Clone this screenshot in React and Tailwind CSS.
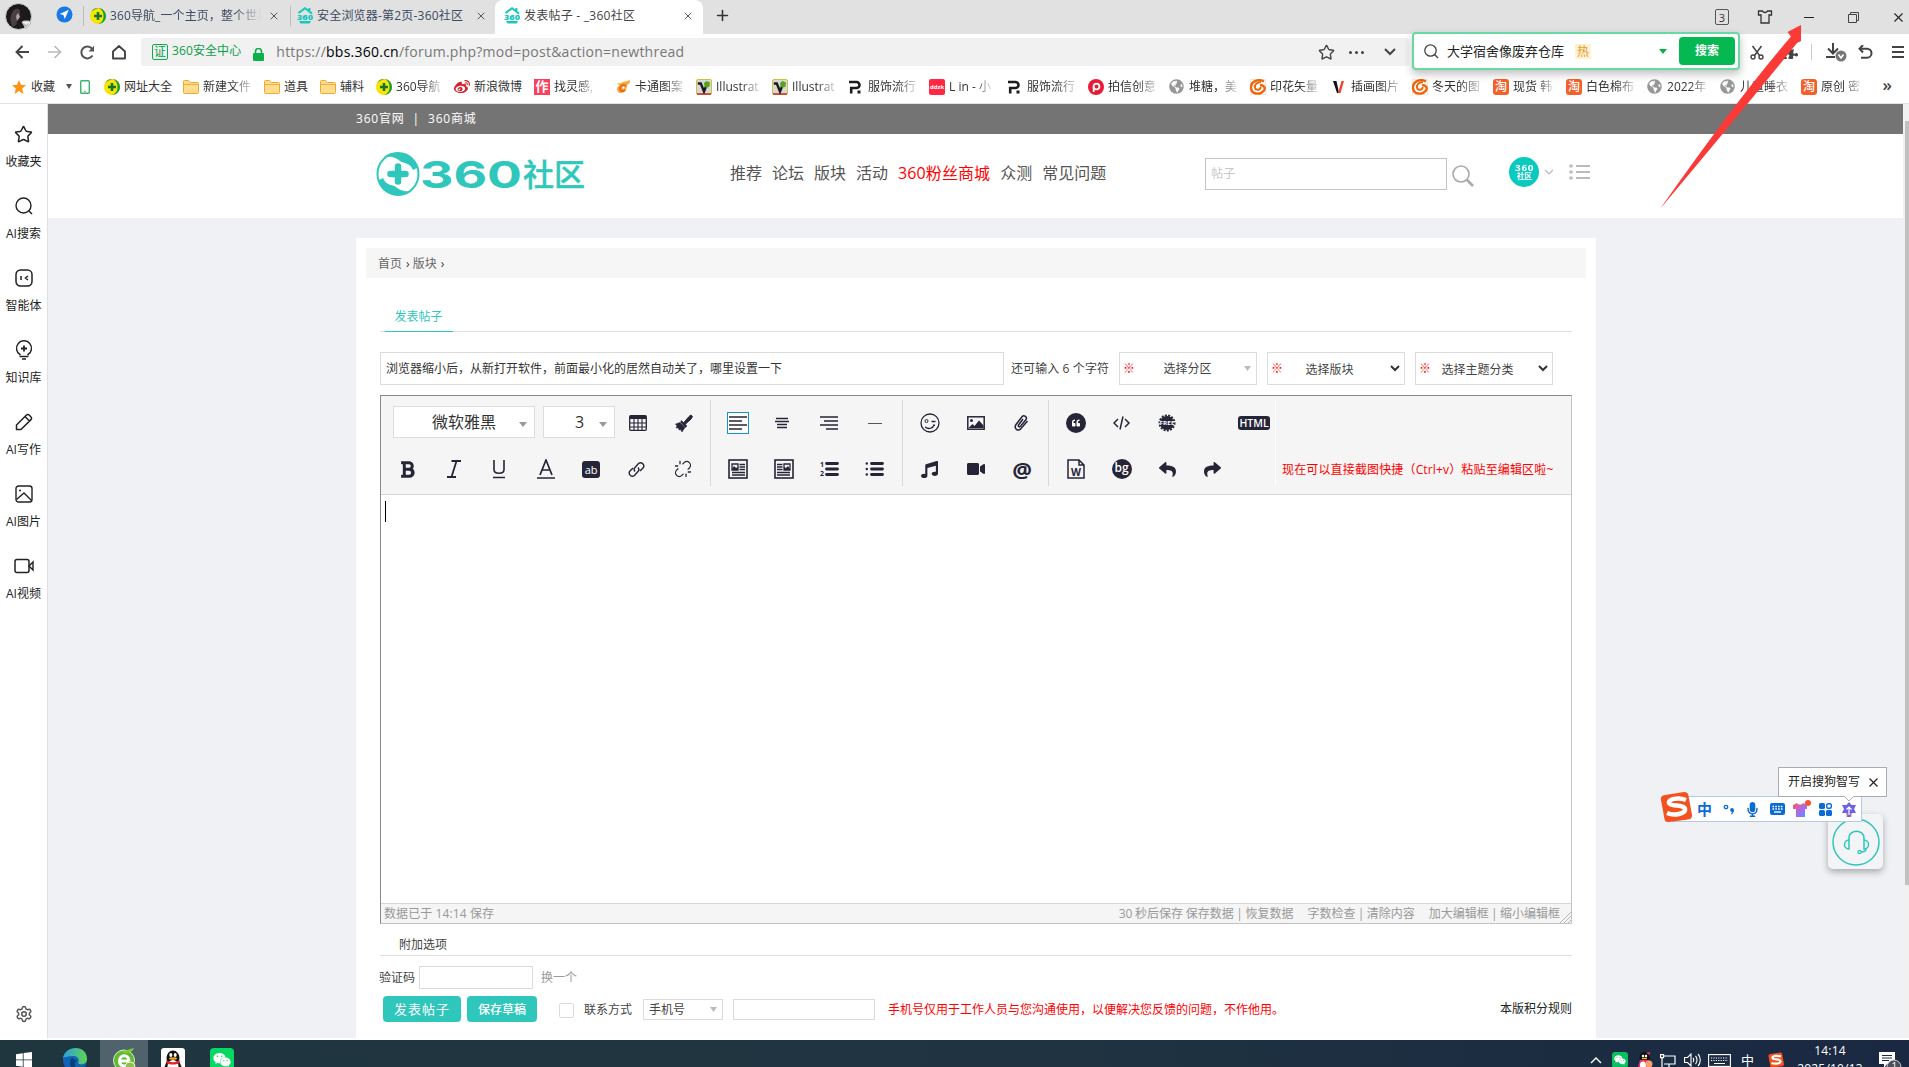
import React from "react";
import { Star, Scissors, Settings, Unlink, X, Plus } from "lucide-react";
import { FaWeixin, FaWeibo, FaReply, FaShare, FaPuzzlePiece, FaMicrophone, FaMusic, FaVideo, FaQuoteLeft, FaBold, FaGlobeAmericas } from "react-icons/fa";

const INK = "#262538";

function Svg({ w = 16, h = 16, box, children, className = "" }) {
  return (
    <svg width={w} height={h} viewBox={box || `0 0 ${w} ${h}`} className={"shrink-0 " + className} fill="none">
      {children}
    </svg>
  );
}

function Nav360({ size = 16 }) {
  return (
    <Svg w={size} h={size} box="0 0 16 16">
      <circle cx="8" cy="8" r="8" fill="#f9e500" />
      <path d="M9 0a8 8 0 0 1 7 8c0 4-3 8-8 8 4-1.500 5.500-4 5.500-8S12 2 9 0zM1 4.500A8 8 0 0 1 9 0C6 .5 3 2 1 4.500z" fill="#149c3c" />
      <path d="M8 4v8M4 8h8" stroke="#14752c" strokeWidth="2.600" />
    </Svg>
  );
}
function Fav360() {
  return (
    <Svg w={16} h={17}>
      <path d="M1.500 6 8 1.200 12 4.200M12.400 1v3.600l2.600 2" stroke="#15c7bd" strokeWidth="2" />
      <text x="0" y="12.500" fontSize="7" fontWeight="800" fill="#15c7bd" textLength="16" lengthAdjust="spacingAndGlyphs">360</text>
      <path d="M2 14h12l-1.500 2.600h-9z" fill="#15c7bd" />
    </Svg>
  );
}
function Folder() {
  return (
    <Svg w={16} h={14}>
      <path d="M.5 1.500a1 1 0 0 1 1-1h4l2 2h7a1 1 0 0 1 1 1v9a1 1 0 0 1-1 1h-13a1 1 0 0 1-1-1z" fill="#ffdc8e" stroke="#f0a92c" />
      <path d="M.5 4.500h15" stroke="#f0b040" />
    </Svg>
  );
}
function Vec() {
  return (
    <Svg>
      <rect x=".5" y=".5" width="15" height="15" rx="1.500" fill="#d8d8d8" stroke="#cfc23a" />
      <path d="M1 15h14" stroke="#c8332c" strokeWidth="1.600" />
      <path d="M1.800 4.500h3l3.200 8 3-7.500" stroke="#1c1c1c" strokeWidth="2.400" />
      <path d="M8 4l2.500-2 3.500 1.500-.5 4-3 1.500-2-2z" fill="#54a51d" />
    </Svg>
  );
}
function PDot() {
  return (
    <Svg>
      <path d="M1 3h7.500a3 3 0 0 1 0 6H3.200v5.500" stroke="#1d1d1d" strokeWidth="2.600" />
      <rect x="9.500" y="11.500" width="3" height="3" fill="#1d1d1d" />
    </Svg>
  );
}
function Globe() {
  return <FaGlobeAmericas size={15} className="mr-px shrink-0 text-[#979797]" />;
}
function Swirl() {
  return (
    <Svg>
      <rect x=".5" y=".5" width="15" height="15" fill="#fff" stroke="#f6e6dc" />
      <path d="M14 2.500C9-.5 1 2 1 8.500c0 7 9 8 13 3 2-3-1-6-4-5" stroke="#f0640a" strokeWidth="2.400" />
      <path d="M11 3C7 3 4 6 5 9s6 2 5.500-1" stroke="#f0640a" strokeWidth="2" />
    </Svg>
  );
}
function Tao() {
  return (
    <span className="flex h-4 w-4 shrink-0 items-center justify-center rounded-[3px] bg-[#f4602a] text-[12px] font-medium leading-none text-white">淘</span>
  );
}
function Cat() {
  return (
    <Svg>
      <path d="M2 4c3 1 4 0 6-1s4 0 7-2c0 3-1 4-3 5 0 4-2 8-6 8-3 0-4-2-4-4s1-3 3-3" fill="#f7a733" />
      <path d="M11 7C8 5 5 7 5 9.500S8 13 10 11" stroke="#e8611c" strokeWidth="1.800" />
      <path d="M7.500 8.500h2" stroke="#fff" strokeWidth="2" />
    </Svg>
  );
}
function Pai() {
  return (
    <Svg>
      <circle cx="8" cy="8" r="8" fill="#e81b36" />
      <circle cx="8.500" cy="7.500" r="2.900" stroke="#fff" strokeWidth="1.800" />
      <path d="M5.700 7.500V13" stroke="#fff" strokeWidth="1.800" />
    </Svg>
  );
}
function RedV() {
  return (
    <Svg>
      <path d="M2 2h3.500l2.500 12H6z" fill="#111" />
      <path d="M10.500 2H13L9.500 14H7z" fill="#f0452c" />
    </Svg>
  );
}

const BOOKMARKS = [
  ["网址大全", <Nav360 />, "w-[79px]", true],
  ["新建文件", <Folder />, "w-[81px]"],
  ["道具", <Folder />, "w-[56px]", true],
  ["辅料", <Folder />, "w-[56px]", true],
  ["360导航", <Nav360 />, "w-[78px]"],
  ["新浪微博", <FaWeibo size={16} className="shrink-0 text-[#d3232c]" />, "w-[80px]", true],
  ["找灵感,", <span className="flex h-4 w-4 shrink-0 items-center justify-center bg-[#fb3f5e] text-[13px] font-bold leading-none text-white">作</span>, "w-[81px]"],
  ["卡通图案", <Cat />, "w-[81px]"],
  ["Illustrat", <Vec />, "w-[76px]"],
  ["Illustrat", <Vec />, "w-[76px]"],
  ["服饰流行", <PDot />, "w-[81px]"],
  ["L in - 小", <span className="flex h-4 w-4 shrink-0 items-center justify-center rounded-[2px] bg-[#ff2741] text-[6px] font-bold leading-none text-white">ddzk</span>, "w-[78px]"],
  ["服饰流行", <PDot />, "w-[81px]"],
  ["拍信创意", <Pai />, "w-[81px]"],
  ["堆糖，美", <Globe />, "w-[81px]"],
  ["印花矢量", <Swirl />, "w-[81px]"],
  ["插画图片", <RedV />, "w-[81px]"],
  ["冬天的图", <Swirl />, "w-[81px]"],
  ["现货 韩", <Tao />, "w-[73px]"],
  ["白色棉布", <Tao />, "w-[81px]"],
  ["2022年", <Globe />, "w-[73px]"],
  ["儿童睡衣", <Globe />, "w-[81px]"],
  ["原创 密", <Tao />, "w-[73px]"],
];

function Bookmark({ label, icon, width, full }) {
  return (
    <div className={"flex shrink-0 items-center gap-1 " + width}>
      {icon}
      <span className={"whitespace-nowrap text-[12px] leading-[18px] text-[#333] " + (full ? "" : "[mask-image:linear-gradient(to_right,#000_60%,rgba(0,0,0,0.2)_100%)]")}>{label}</span>
    </div>
  );
}

function TabBar() {
  return (
    <div className="flex h-[34px] shrink-0 items-start bg-[#e1e1e1] text-[12px] text-[#3b4a5e]">
      <div className="ml-[5px] mt-[3px] h-[27px] w-[27px] shrink-0">
        <Svg w={28} h={27}>
          <circle cx="13.500" cy="13.500" r="13" fill="#1c1a1c" stroke="#d2d2d2" />
          <path d="M9 7c4-3 7 0 6 5-1 4-4 5-3 9l-4 3c-4-4-3-13 1-17z" fill="#4a4043" />
          <path d="M13 10l2 4-3 4-1-5z" fill="#b4a29c" />
          <path d="M17 19l2-1h5l2 2-5 6z" fill="#eee" stroke="#b8b8b8" />
          <path d="M19 20.500l2.200 3 2.200-3" stroke="#999" />
        </Svg>
      </div>
      <Svg w={17} h={17} className="ml-6 mt-[6px]">
        <circle cx="8.500" cy="8.500" r="8" fill="#1878e8" />
        <path d="M12.800 3.800 3.700 8l3.700 1.100L8.800 13z" fill="#fff" />
      </Svg>
      <div className="ml-[10px] mt-[6px] h-5 w-px bg-[#bcbcbc]" />
      <div className="ml-[6px] flex h-[31px] w-[200px] items-center gap-1">
        <Nav360 />
        <span className="w-[152px] overflow-hidden whitespace-nowrap tracking-[0.100px] [mask-image:linear-gradient(to_right,#000_82%,transparent_100%)]">360导航_一个主页，整个世界</span>
        <X size={12} className="ml-[2px] text-[#555]" strokeWidth={2} />
      </div>
      <div className="mt-[6px] h-5 w-px bg-[#bcbcbc]" />
      <div className="ml-[6px] flex h-[31px] w-[198px] items-center gap-1">
        <Fav360 />
        <span className="w-[152px] whitespace-nowrap tracking-[0.200px]">安全浏览器-第2页-360社区</span>
        <X size={12} className="ml-[2px] text-[#555]" strokeWidth={2} />
      </div>
      <div className="flex h-[34px] w-[208px] items-start rounded-t-[8px] bg-white">
        <div className="flex h-[31px] items-center gap-1 pl-[9px]">
          <Fav360 />
          <span className="w-[154px] whitespace-nowrap tracking-[0.250px] text-[#444]">发表帖子 - _360社区</span>
          <X size={12} className="text-[#555]" strokeWidth={2} />
        </div>
      </div>
      <Plus size={17} strokeWidth={2.200} className="ml-[11px] mt-[7px] text-[#333]" />
      <div className="ml-auto flex h-[34px] items-center">
        <div className="flex h-4 w-[14px] items-center justify-center rounded-[2px] border border-[#555] text-[11px] leading-none text-[#333]">3</div>
        <Svg w={16} h={14} className="ml-[28px]">
          <path d="M1.500 1h4c1 2 4 2 5 0h4v4h-2.500v8H4V5H1.500z" stroke="#333" strokeWidth="1.300" />
        </Svg>
        <div className="ml-[31px] h-px w-[10px] bg-[#222]" />
        <Svg w={11} h={11} className="ml-[34px]">
          <path d="M.5 2.500h8v8h-8zM2.500 2.500v-2h8v8h-2" stroke="#444" />
        </Svg>
        <X size={15} strokeWidth={1.700} className="ml-[32px] mr-[3px] text-[#222]" />
      </div>
    </div>
  );
}

function AddressRow() {
  return (
    <div className="flex h-[36px] shrink-0 items-start bg-white pt-1">
      <div className="flex h-7 items-center">
        <Svg w={14} h={14} className="ml-[15px]"><path d="M14 7H1.500M7.500 1 1.500 7l6 6" stroke="#444" strokeWidth="1.900" /></Svg>
        <Svg w={14} h={14} className="ml-[19px]"><path d="M0 7h12.500M6.500 1l6 6-6 6" stroke="#bbb" strokeWidth="1.700" /></Svg>
        <Svg w={15} h={15} className="ml-[18px]"><path d="M12.500 10.500A6 6 0 1 1 12 3.600" stroke="#555" strokeWidth="2" /><path d="M14 .8V6.500H8.500z" fill="#555" /></Svg>
        <Svg w={16} h={15} className="ml-4"><path d="M2 13.500V6.500L8 1l6 5.500v7z" stroke="#444" strokeWidth="1.900" strokeLinejoin="round" /></Svg>
      </div>
      <div className="ml-[14px] flex h-7 w-[1268px] shrink-0 items-center rounded-[3px] bg-[#f1f1f1]">
        <div className="ml-[11px] flex h-4 w-4 items-center justify-center rounded-[2px] border border-[#08b04c] text-[12px] leading-none text-[#08a048]">证</div>
        <span className="-mt-[2px] ml-1 text-[12px] tracking-[0.100px] text-[#08a048]">360安全中心</span>
        <Svg w={11} h={13} className="ml-3 mt-1"><path d="M2.500 6V3.500a3 3 0 0 1 6 0V6" stroke="#0cb04c" strokeWidth="1.600" /><rect y="5" width="11" height="8" rx="1" fill="#0cb04c" /></Svg>
        <span className="-mt-px ml-3 whitespace-nowrap text-[14px] tracking-[0.245px] text-[#777]">https://<span className="text-black">bbs.360.cn</span>/forum.php?mod=post&amp;action=newthread</span>
        <Star size={17} strokeWidth={2} className="ml-auto text-[#444]" />
        <div className="ml-[14px] flex gap-[3px]">
          <i className="h-[3px] w-[3px] rounded-full bg-[#444]" /><i className="h-[3px] w-[3px] rounded-full bg-[#444]" /><i className="h-[3px] w-[3px] rounded-full bg-[#444]" />
        </div>
        <Svg w={12} h={8} className="ml-[20px] mr-[13px]"><path d="M1 1l5 5 5-5" stroke="#444" strokeWidth="2" /></Svg>
      </div>
      <div className="z-10 -mt-[6px] ml-[3px] flex h-[38px] w-[328px] shrink-0 items-center rounded-[4px] border-2 border-[#67d9a2] bg-white shadow-[0_4px_8px_rgba(0,0,0,0.25)]">
        <Svg w={15} h={15} className="ml-[10px]"><circle cx="6.500" cy="6.500" r="5.700" stroke="#444" strokeWidth="1.300" /><path d="M10.500 10.500 14 14" stroke="#444" strokeWidth="1.400" /></Svg>
        <span className="ml-2 mt-[2px] text-[13px] text-[#222]">大学宿舍像废弃仓库</span>
        <span className="ml-[11px] bg-[#fff2d6] px-[2px] text-[12px] leading-[15px] text-[#e89a1c]">热</span>
        <Svg w={8} h={5} className="ml-auto"><path d="M0 0h8L4 5z" fill="#08b04c" /></Svg>
        <div className="ml-3 mr-[3px] flex h-7 w-14 items-center justify-center rounded-[4px] bg-[#06b851] text-[12px] font-bold text-white">搜索</div>
      </div>
      <div className="flex h-7 flex-1 items-center">
        <Svg w={14} h={15} className="ml-[10px]"><path d="M2.500 1 9.500 10.500M11.500 1 4.500 10.500" stroke="#444" strokeWidth="1.500" /><circle cx="3" cy="12" r="2" stroke="#444" strokeWidth="1.400" /><circle cx="11" cy="12" r="2" stroke="#444" strokeWidth="1.400" /></Svg>
        <FaPuzzlePiece size={16} className="ml-[18px] shrink-0 text-[#444]" />
        <div className="ml-[13px] h-4 w-px bg-[#ccc]" />
        <Svg w={22} h={20} className="ml-[13px]">
          <path d="M8 1v10M3 6.500l5 5 5-5M1 15h9" stroke="#444" strokeWidth="2" />
          <circle cx="16" cy="14" r="5.500" fill="#777" /><path d="M13.500 12.500 16 16l2.500-3.500" stroke="#fff" strokeWidth="1.500" />
        </Svg>
        <Svg w={15} h={14} className="ml-[11px]"><path d="M5 0 1.500 3.700 5 7.500M2 3.700h7a4.500 4.500 0 0 1 0 9H3" stroke="#444" strokeWidth="2" /></Svg>
        <Svg w={12} h={12} className="ml-[19px]"><path d="M0 1h12M0 6h12M0 11h12" stroke="#444" strokeWidth="1.800" /></Svg>
      </div>
    </div>
  );
}

function BookmarkRow() {
  return (
    <div className="flex h-[34px] shrink-0 items-center border-b border-[#e0e3e2] bg-white text-[12px] text-[#333]">
      <Svg w={14} h={14} className="ml-3"><path d="M7 0l2 4.800 5 .4-3.800 3.300L11.400 14 7 11.100 2.600 14l1.200-5.500L0 5.200l5-.4z" fill="#ff9413" /></Svg>
      <span className="ml-[5px]">收藏</span>
      <Svg w={6} h={5} className="ml-[11px]"><path d="M0 0h6L3 5z" fill="#555" /></Svg>
      <Svg w={10} h={14} className="ml-2"><rect x=".7" y=".7" width="8.600" height="12.600" rx="1" stroke="#3cb46e" strokeWidth="1.400" /><path d="M4 11.300h2" stroke="#3cb46e" /></Svg>
      <div className="ml-[14px] flex flex-1">
        {BOOKMARKS.map(([label, icon, width, full], i) => <Bookmark key={i} label={label} icon={icon} width={width} full={full} />)}
      </div>
      <span className="-mt-[3px] mr-[17px] text-[17px] font-semibold leading-4 text-[#444]">»</span>
    </div>
  );
}

const SIDE = [
  ["收藏夹", <Star size={19} strokeWidth={1.900} />],
  ["AI搜索", <Svg w={18} h={18}><circle cx="8.500" cy="8.500" r="7.500" stroke="currentColor" strokeWidth="1.400" /><path d="M13.500 13.500 17 17" stroke="currentColor" strokeWidth="1.500" /></Svg>],
  ["智能体", <Svg w={18} h={18}><rect x="1" y="1" width="16" height="16" rx="4.500" stroke="currentColor" strokeWidth="1.500" /><path d="M6 7v4M13 7l-2.500 2L13 11" stroke="currentColor" strokeWidth="1.500" /></Svg>],
  ["知识库", <Svg w={18} h={20}><path d="M5.500 15A7.500 7.500 0 1 1 12.500 15M4.500 16.500h9M7 19h4" stroke="currentColor" strokeWidth="1.500" /><path d="M9 5.500v6M6 8.500h6" stroke="currentColor" strokeWidth="1.800" /></Svg>],
  ["AI写作", <Svg w={18} h={18}><path d="M1.500 16.500v-4.500L11.500 2a1.800 1.800 0 0 1 2.600 0L16 4a1.800 1.800 0 0 1 0 2.600l-10 9.900zM10 3.500l4.500 4.500" stroke="currentColor" strokeWidth="1.500" strokeLinejoin="round" /></Svg>],
  ["AI图片", <Svg w={18} h={18}><rect x="1" y="1" width="16" height="16" rx="2.500" stroke="currentColor" strokeWidth="1.400" /><circle cx="5" cy="5.500" r="1" fill="currentColor" /><path d="M1.500 14.500 9 8l7.500 7.500" stroke="currentColor" strokeWidth="1.400" /></Svg>],
  ["AI视频", <Svg w={20} h={16}><rect x="1" y="1.500" width="14" height="13" rx="2" stroke="currentColor" strokeWidth="1.500" /><path d="M15 8l4-4v8z" stroke="currentColor" strokeWidth="1.400" /></Svg>],
];

function Sidebar() {
  return (
    <aside className="flex w-12 shrink-0 flex-col border-r border-[#dfe0e3] bg-white pt-[20px] text-[#222]">
      {SIDE.map(([label, icon]) => (
        <div key={label} className="flex h-[72px] shrink-0 flex-col items-center">
          <div className="flex h-5 items-center">{icon}</div>
          <span className="mt-[9px] whitespace-nowrap text-[12px] leading-[18px]">{label}</span>
        </div>
      ))}
      <div className="mb-[15px] mt-auto flex justify-center">
        <Settings size={18} strokeWidth={2} className="text-[#555]" />
      </div>
    </aside>
  );
}

function SiteHeader() {
  return (
    <>
      <div className="flex h-[30px] shrink-0 items-center bg-[#747474] pl-[308px] text-[12px] tracking-[0.800px] text-white">
        <span>360官网</span><span className="mx-[8px]">|</span><span>360商城</span>
      </div>
      <header className="flex h-[84px] shrink-0 items-center bg-white">
        <Svg w={210} h={46} className="ml-[328px] mt-[-5px]">
          <ellipse cx="22" cy="23" rx="20.500" ry="21" stroke="#2fc7bb" strokeWidth="2" />
          <path d="M8 6c10-8 26-4 32 7l1 4-4 2c-3-8-9-6-13-9S17 5 8 6z" fill="#2fc7bb" />
          <path d="M36 40c-10 8-26 4-32-7l-1-4 4-2c3 8 9 6 13 9s7 5 16 4z" fill="#2fc7bb" />
          <path d="M22 15.500v15M14.500 23h15" stroke="#2fc7bb" strokeWidth="6.500" strokeLinecap="round" />
          <text x="44" y="36.500" fontSize="37" fontWeight="700" fill="#2fc7bb" fontFamily="Inter" textLength="102" lengthAdjust="spacingAndGlyphs">360</text>
          <text x="147" y="34.500" fontSize="31" fontWeight="500" fill="#2fc7bb" stroke="#2fc7bb" strokeWidth=".4" fontFamily="Noto Sans CJK SC" textLength="62" lengthAdjust="spacingAndGlyphs">社区</text>
        </Svg>
        <nav className="-mt-[7px] ml-[144px] flex gap-[10px] text-[16px] text-[#555]">
          <span>推荐</span><span>论坛</span><span>版块</span><span>活动</span><span className="tracking-[0.100px] text-[#f00]">360粉丝商城</span><span>众测</span><span>常见问题</span>
        </nav>
        <div className="-mt-[4px] ml-[99px] flex h-8 w-[242px] items-center border border-[#c4c4c4] pl-[5px] text-[12px] text-[#c8c8c8]">帖子</div>
        <Svg w={22} h={22} className="-mt-px ml-[5px]"><circle cx="9" cy="9" r="8" stroke="#aaa" strokeWidth="1.600" /><path d="M14.500 14.500l6.500 6.500" stroke="#aaa" strokeWidth="2.600" /></Svg>
        <div className="-mt-[8px] ml-[35px] flex h-[30px] w-[30px] flex-col items-center justify-center rounded-full bg-[#08cabe] font-bold text-white">
          <span className="scale-x-125 text-[8px] leading-[8px] tracking-[0.500px]">360</span><span className="text-[7.500px] leading-[8px]">社区</span>
        </div>
        <Svg w={10} h={6} className="-mt-[8px] ml-[5px]"><path d="M1 1l4 4 4-4" stroke="#bbb" strokeWidth="1.200" /></Svg>
        <Svg w={21} h={16} className="-mt-[8px] ml-[15px]"><path d="M7 2h14M7 8h14M7 14h14" stroke="#bbb" strokeWidth="2" /><circle cx="2" cy="2" r="1.800" fill="#bbb" /><circle cx="2" cy="8" r="1.800" fill="#bbb" /><circle cx="2" cy="14" r="1.800" fill="#bbb" /></Svg>
      </header>
    </>
  );
}

function Cell({ children, active }) {
  return (
    <div className="flex h-[46px] w-[45.700px] items-center justify-center text-[#262538]">
      {active ? <div className="flex h-[22px] w-[22px] items-center justify-center border border-[#1296c8] bg-white">{children}</div> : children}
    </div>
  );
}

function Lines({ kind }) {
  const d = {
    left: "M0 1h18M0 5h13M0 9h18M0 13h13",
    center: "M1 2.500h12M0 5.500h14M2 8.500h10M2 11.500h10",
    right: "M0 1h18M4 5h14M0 9h18M6 13h12",
  }[kind];
  return <Svg w={18} h={14}><path d={d} stroke={INK} strokeWidth="1.300" /></Svg>;
}
function DocPic({ flip }) {
  return (
    <Svg w={20} h={20} className={flip ? "-scale-x-100" : ""}>
      <rect x="1" y="1" width="18" height="18" stroke={INK} strokeWidth="1.600" />
      <path d="M4 5h6v6H4zM11.500 5.500H17M11.500 8H17M11.500 10.500H17M4 13.500h13M4 16h13" stroke={INK} strokeWidth="1.300" />
      <path d="M4 10l2-3 2 2 2-1v3H4z" fill={INK} />
    </Svg>
  );
}
function ListIcon({ num }) {
  return (
    <Svg w={19} h={16}>
      <path d="M6.500 2.500h11M6.500 8h11M6.500 13.500h11" stroke={INK} strokeWidth="2.800" strokeLinecap="round" />
      {num ? (<><text x="0" y="6" fontSize="7" fontWeight="700" fill={INK}>1</text><text x="0" y="15" fontSize="7" fontWeight="700" fill={INK}>2</text></>) : (
        <><circle cx="1.800" cy="2.500" r="1.200" fill={INK} /><circle cx="1.800" cy="8" r="1.200" fill={INK} /><circle cx="1.800" cy="13.500" r="1.200" fill={INK} /></>
      )}
    </Svg>
  );
}
function Caret({ className = "" }) {
  return <Svg w={8} h={5} className={className}><path d="M0 0h8L4 5z" fill="#999" /></Svg>;
}
function ChainIcon() {
  return (
    <Svg w={17} h={17}>
      <path d="M7 10.500a3 3 0 0 1 0-4l3.500-4a3.200 3.200 0 0 1 4.500 4.500l-3 3M10 6.500a3 3 0 0 1 0 4l-3.500 4A3.200 3.200 0 0 1 2 10l3-3" stroke={INK} strokeWidth="1.400" />
    </Svg>
  );
}

function EditorToolbar() {
  return (
    <div className="flex h-[99px] shrink-0 items-start border-b border-[#d6d6d6] bg-[#f5f5f5]">
      <div className="ml-[4px] mt-1 h-[86px] w-[326px] border-r border-[#d8d8d8]">
        <div className="flex h-[46px] items-center">
          <div className="-mt-[2px] ml-2 flex h-8 w-[142px] shrink-0 items-center border border-[#dcdcdc] bg-white pl-[38px] text-[16px] text-[#333]">微软雅黑<Caret className="ml-auto mr-[7px] mt-1" /></div>
          <div className="-mt-[2px] ml-2 flex h-8 w-[72px] shrink-0 items-center border border-[#dcdcdc] bg-white pl-[31px] text-[16px] text-[#333]">3<Caret className="ml-auto mr-[7px] mt-1" /></div>
          <Cell>
            <Svg w={18} h={16}>
              <rect x=".7" y=".7" width="16.600" height="14.600" rx="1" stroke={INK} strokeWidth="1.300" />
              <path d="M1 2.500h16" stroke={INK} strokeWidth="3" /><path d="M1 8h16M1 12h16M5 3v12M9 3v12M13 3v12" stroke={INK} strokeWidth="1.100" />
            </Svg>
          </Cell>
          <Cell>
            <Svg w={18} h={18}>
              <path d="M8.500 9 14 2.500l2-1.500 1.500 1.500L16 5l-6 5.500z" fill={INK} stroke={INK} strokeWidth="1" />
              <path d="M6.500 6.500 12 12l-1.500 1.500-5-5.500zM5 8.500l5 5L7 18l-1.500-2.500L4 16l-.5-2L1 14l1-2-1.500-2z" fill={INK} stroke={INK} strokeWidth=".5" />
            </Svg>
          </Cell>
        </div>
        <div className="flex h-[46px] items-center">
          <Cell><FaBold size={19} /></Cell>
          <Cell><Svg w={14} h={18}><path d="M4.500 1H14M0 17h9M9.500 1 4.500 17" stroke={INK} strokeWidth="1.800" /></Svg></Cell>
          <Cell><Svg w={14} h={19}><path d="M2 0v9.500c0 5 10 5 10 0V0M1 17.500h12" stroke={INK} strokeWidth="1.600" /></Svg></Cell>
          <Cell><Svg w={18} h={20} className="ml-[3px]"><path d="M3 16 9 1l6 15M5 11h8M0 19h18" stroke={INK} strokeWidth="1.700" /></Svg></Cell>
          <Cell><span className="ml-px flex h-[17px] w-[18px] items-center justify-center rounded-[3px] bg-[#262538] text-[11px] leading-none text-white">ab</span></Cell>
          <Cell><ChainIcon /></Cell>
          <Cell><Unlink size={18} strokeWidth={1.700} className="ml-[2px]" /></Cell>
        </div>
      </div>
      <div className="mt-1 h-[86px] w-[192px] border-r border-[#d8d8d8] pl-[4px]">
        <div className="flex h-[46px]"><Cell active><Lines kind="left" /></Cell><Cell><Lines kind="center" /></Cell><Cell><Lines kind="right" /></Cell><Cell><span className="h-px w-[14px] bg-[#555]" /></Cell></div>
        <div className="flex h-[46px]"><Cell><DocPic /></Cell><Cell><DocPic flip /></Cell><Cell><ListIcon num /></Cell><Cell><ListIcon /></Cell></div>
      </div>
      <div className="mt-1 h-[86px] w-[146px] border-r border-[#d8d8d8] pl-[4px]">
        <div className="flex h-[46px]">
          <Cell><Svg w={20} h={20}><circle cx="10" cy="10" r="9" stroke={INK} strokeWidth="1.300" /><circle cx="6.500" cy="8" r="1.500" stroke={INK} /><path d="M11.500 8.500h4M5 14c4 3 8 1 9-2l1 .5" stroke={INK} strokeWidth="1.300" /></Svg></Cell>
          <Cell><Svg w={18} h={14}><rect x=".8" y=".8" width="16.400" height="12.400" stroke={INK} strokeWidth="1.500" /><circle cx="4.500" cy="4.500" r="1.500" fill={INK} /><path d="M2 11.500 5.500 8l2 2L12 4.500l4.500 5v2.500H2z" fill={INK} /></Svg></Cell>
          <Cell><Svg w={16} h={18}><path d="M10 5 5.500 11c-.8 1.500.8 2.500 2 1.300L13 5.500c1.500-2.500-2-5-4-2.700L3 10.500c-2.500 4 2 7.500 5 4L14.500 7" stroke={INK} strokeWidth="1.500" /></Svg></Cell>
        </div>
        <div className="flex h-[46px]"><Cell><FaMusic size={17} /></Cell><Cell><FaVideo size={18} /></Cell><Cell><span className="ml-[2px] text-[22px] font-bold leading-5">@</span></Cell></div>
      </div>
      <div className="mt-1 h-[86px] w-[227px] border-r border-white pl-[4px]">
        <div className="flex h-[46px]">
          <Cell><span className="flex h-5 w-5 items-center justify-center rounded-full bg-[#262538] text-white"><FaQuoteLeft size={8} /></span></Cell>
          <Cell><Svg w={17} h={14}><path d="M5 3 1 7l4 4M12 3l4 4-4 4M10 .5l-3 13" stroke={INK} strokeWidth="1.500" /></Svg></Cell>
          <Cell>
            <Svg w={18} h={18}><circle cx="9" cy="9" r="7" fill={INK} /><circle cx="9" cy="9" r="7.500" stroke={INK} strokeWidth="2" strokeDasharray="2 1.300" /><text x="1.500" y="11" fontSize="5.500" fontWeight="700" fill="#fff" textLength="15" lengthAdjust="spacingAndGlyphs">FREE</text></Svg>
          </Cell>
          <span className="ml-[48px] mt-4 flex h-[14px] w-[32px] items-center justify-center rounded-[3px] bg-[#262538] text-[10.500px] font-semibold leading-none text-white">HTML</span>
        </div>
        <div className="flex h-[46px]">
          <Cell><Svg w={18} h={20}><path d="M1 1h11l5 5v13H1zM12 1v5h5" stroke={INK} strokeWidth="1.500" /><text x="4" y="16.500" fontSize="11" fontWeight="700" fill={INK} textLength="10" lengthAdjust="spacingAndGlyphs">W</text></Svg></Cell>
          <Cell><span className="flex h-5 w-5 items-center justify-center rounded-full bg-[#262538] pb-[2px] text-[12px] font-semibold leading-none text-white">bg</span></Cell>
          <Cell><FaReply size={17} /></Cell>
          <Cell><FaShare size={17} /></Cell>
        </div>
      </div>
      <span className="ml-[6px] mt-[65px] whitespace-nowrap text-[12px] leading-[18px] tracking-[0.150px] text-[#f00]">现在可以直接截图快捷（Ctrl+v）粘贴至编辑区啦~</span>
    </div>
  );
}

function Pick({ label, native }) {
  return (
    <div className="mr-[10px] flex h-[33px] w-[138px] shrink-0 items-center border border-[#dcdcdc] bg-white pl-[3px]">
      <span className="w-3 text-[#f00]">※</span>
      <span className={native ? "flex-1 pr-[14px] pt-[2px] text-center" : "flex-1 pr-1 text-center"}>{label}</span>
      {native ? <Svg w={10} h={7} className="mr-1"><path d="M1 1l4 4 4-4" stroke="#333" strokeWidth="2" /></Svg> : <Svg w={7} h={5} className="mr-[5px]"><path d="M0 0h7L3.500 5z" fill="#bbb" /></Svg>}
    </div>
  );
}

function PostForm() {
  return (
    <main className="ml-[308px] mt-5 flex h-[801px] w-[1240px] flex-col bg-white px-[10px] pt-[10px] text-[12px] text-[#444]">
      <div className="flex h-[30px] shrink-0 items-center bg-[#f6f6f6] pl-3 pt-[2px] text-[#666]">首页<span className="ml-1 mr-[3px] text-[#333]">›</span>版块<span className="ml-1 text-[#333]">›</span></div>
      <div className="mx-[14px] mt-[23px] flex h-[31px] shrink-0 border-b border-[#e0e0e0]">
        <div className="ml-[5px] flex h-[31px] w-[68px] items-center justify-center border-b border-[#2fc7bb] pr-px pt-[2px] text-[#2fc7bb]">发表帖子</div>
      </div>
      <div className="ml-[14px] mt-5 flex shrink-0 items-center">
        <div className="flex h-[33px] w-[624px] items-center border border-[#dcdcdc] pl-[5px] text-[#333]">浏览器缩小后，从新打开软件，前面最小化的居然自动关了，哪里设置一下</div>
        <span className="ml-[7px] w-[108px] whitespace-nowrap tracking-[0.100px]">还可输入 6 个字符</span>
        <Pick label="选择分区" />
        <Pick label="选择版块" native />
        <Pick label="选择主题分类" native />
      </div>
      <section className="ml-[14px] mt-[10px] flex h-[529px] w-[1192px] shrink-0 flex-col border border-[#c4c4c4] border-l-[#888] border-t-[#888]">
        <EditorToolbar />
        <div className="flex-1 pl-1 pt-[6px]"><div className="h-[21px] w-px bg-black" /></div>
        <div className="flex h-5 shrink-0 items-center border-t border-[#d6d6d6] bg-[#f5f5f5] pl-[3px] text-[#999]">
          <span className="tracking-[0.100px]">数据已于 14:14 保存</span>
          <span className="ml-auto [word-spacing:-0.500px]">30 秒后保存 保存数据 | 恢复数据</span>
          <span className="ml-[14px] [word-spacing:-0.800px]">字数检查 | 清除内容</span>
          <span className="ml-[14px] [word-spacing:-0.800px]">加大编辑框 | 缩小编辑框</span>
          <Svg w={11} h={18}><path d="M0 18 11 7M4 18l7-7M8 18l3-3" stroke="#bbb" /></Svg>
        </div>
      </section>
      <div className="mx-[14px] flex h-[32px] shrink-0 items-center border-b border-[#e0e0e0] pl-[19px] pt-[10px]">附加选项</div>
      <div className="ml-[13px] mt-[10px] flex h-[23px] shrink-0 items-center">验证码<div className="ml-[4px] mr-2 h-[23px] w-[114px] border border-[#dcdcdc]" /><span className="text-[#999]">换一个</span></div>
      <div className="ml-[17px] mr-[14px] mt-[7px] flex h-[26px] shrink-0 items-center">
        <div className="flex h-[26px] w-[78px] items-center justify-center rounded-[4px] bg-[#2fc7bb] pt-px text-[13px] tracking-[1px] text-white">发表帖子</div>
        <div className="ml-[6px] flex h-[26px] w-[70px] items-center justify-center rounded-[4px] bg-[#2fc7bb] pt-px font-medium text-white">保存草稿</div>
        <div className="ml-[22px] mt-[3px] h-[15px] w-[15px] rounded-[2px] border border-[#dcdcdc]" />
        <span className="ml-[10px] pt-px">联系方式</span>
        <div className="ml-[11px] mt-px flex h-[21px] w-[80px] items-center border border-[#dcdcdc] pl-[5px]">手机号<Svg w={7} h={5} className="ml-auto mr-[5px]"><path d="M0 0h7L3.500 5z" fill="#bbb" /></Svg></div>
        <div className="ml-[10px] mt-px h-[21px] w-[142px] border border-[#dcdcdc]" />
        <span className="ml-[13px] pt-px text-[#f00]">手机号仅用于工作人员与您沟通使用，以便解决您反馈的问题，不作他用。</span>
        <span className="ml-auto text-[#222]">本版积分规则</span>
      </div>
    </main>
  );
}

function Sogou({ size }) {
  return (
    <Svg w={size} h={size} box="0 0 32 32">
      <path d="M5 4 24 1c3 0 4 1 4.500 4L32 24c0 3-1 4-4 4.500L9 31c-3 .5-4-1-4.500-3L1 9c-.5-3 1-4.500 4-5z" fill="#f4511e" />
      <path d="M26 9c-8-3-18-1-17 3s15 1 16 6-11 7-18 4" stroke="#fff" strokeWidth="4.500" />
    </Svg>
  );
}

function InputMethodBar() {
  return (
    <>
      <div className="absolute left-[1828px] top-[814px] flex h-[55px] w-[55px] items-center justify-center rounded-[5px] bg-[#f3f4f5] shadow-[0_3px_7px_rgba(0,0,0,0.3)]">
        <Svg w={48} h={48}>
          <circle cx="24" cy="24" r="23" stroke="#2fc7bb" strokeWidth="1.500" />
          <path d="M17 22v-2c0-9 15-9 15 0v2" stroke="#2fc7bb" strokeWidth="1.500" />
          <path d="M17 22c-6 0-6 9 0 9zM32 22c6 0 6 9 0 9zM34 31c0 3-3 3-5 3" stroke="#2fc7bb" strokeWidth="1.500" />
          <circle cx="27.500" cy="34" r="1.600" stroke="#2fc7bb" strokeWidth="1.300" />
        </Svg>
      </div>
      <div className="absolute left-[1672px] top-[796px] flex h-[26px] w-[190px] items-center border border-[#b3c9e4] bg-white text-[#0a6bd6]">
        <span className="ml-[24px] w-[17px] text-[15px] font-bold leading-none">中</span>
        <Svg w={12} h={12} className="ml-[9px]"><circle cx="3" cy="4" r="1.700" stroke="currentColor" strokeWidth="1.300" /><circle cx="9" cy="7" r="1.900" fill="currentColor" /><path d="M10.500 7c0 2-1 3-2 4" stroke="currentColor" strokeWidth="1.300" /></Svg>
        <FaMicrophone size={15} className="ml-[10px]" />
        <Svg w={15} h={12} className="ml-[10px]"><rect width="15" height="12" rx="2" fill="currentColor" /><path d="M2.500 3.500h10M2.500 6h10" stroke="#fff" strokeWidth="1.500" strokeDasharray="1.600 1.200" /><path d="M4 9h7" stroke="#fff" strokeWidth="1.400" /></Svg>
        <Svg w={18} h={18} className="ml-[8px]">
          <defs><linearGradient id="shirt" x1="0" y1="0" x2="1" y2="1"><stop stopColor="#ff5a5a" /><stop offset=".6" stopColor="#a46cf6" /><stop offset="1" stopColor="#2ea8ff" /></linearGradient></defs>
          <path d="M0 5l4-2c1 2 5 2 6 0l4 2v4h-2v8H3V9H0z" fill="url(#shirt)" /><circle cx="15" cy="3" r="3" fill="#fa5232" />
        </Svg>
        <Svg w={13} h={13} className="ml-[8px]"><rect width="6" height="6" rx="1.500" fill="currentColor" /><rect x="7.700" y=".7" width="4.600" height="4.600" rx="1.500" stroke="currentColor" strokeWidth="1.400" /><rect y="7" width="6" height="6" rx="1.500" fill="currentColor" /><rect x="7" y="7" width="6" height="6" rx="1.500" fill="currentColor" /></Svg>
        <Svg w={14} h={15} className="ml-[10px]"><path d="M7 0l2.500 3H14l-2 4 2 4H9.500L9 15H5l-.5-4H0l2-4-2-4h4.500z" fill="#6d62e6" /><path d="M7 13V6M4.500 7.500 7 5l2.500 2.500" stroke="#fff" strokeWidth="1.200" /><path d="M5 11v4M9 11v4" stroke="#ef8b8b" /></Svg>
      </div>
      <div className="absolute left-[1660px] top-[791px]"><Sogou size={32} /></div>
      <div className="absolute left-[1778px] top-[767px] flex h-[30px] w-[109px] items-center border border-[#a5adb5] bg-white pl-[9px] text-[12px] text-[#222]">
        开启搜狗智写<Svg w={9} h={9} className="ml-[9px]"><path d="M.5.5l8 8M8.500.5l-8 8" stroke="#222" strokeWidth="1.200" /></Svg>
      </div>
      <Svg w={10} h={6} className="absolute left-[1844px] top-[796px]"><path d="M0 0l5 5 5-5z" fill="#fff" /><path d="M.5.500l4.500 4.500 4.500-4.500" stroke="#a5adb5" /></Svg>
    </>
  );
}

function Taskbar() {
  return (
    <footer className="flex h-[27px] shrink-0 items-start overflow-hidden bg-gradient-to-r from-[#20363f] via-[#1f3440] to-[#1a2842] text-white">
      <Svg w={16} h={16} className="ml-4 mt-[12px]"><path d="M0 2.200 6.800 1.200V7.500H0zM7.600 1 16 0v7.500H7.600zM0 8.300h6.800v6.400L0 13.700zM7.600 8.300H16V16l-8.400-1.200z" fill="#fff" /></Svg>
      <Svg w={24} h={24} className="ml-[31px] mt-2">
        <defs><linearGradient id="edge" x1="0" y1="0" x2="1" y2="0"><stop stopColor="#2b9fe0" /><stop offset="1" stopColor="#5fd44e" /></linearGradient></defs>
        <circle cx="12" cy="12" r="12" fill="#0f62b5" />
        <path d="M0 10C2-3 24-4 24 11c0 5-6 7-9 4 2-3 0-7-5-7-4 0-8 1-10 2z" fill="url(#edge)" />
        <path d="M9 10c-4 4-2 12 6 14-3-5-5-9-1-11" fill="#0b3f78" />
      </Svg>
      <div className="ml-[13px] flex h-[27px] w-12 justify-center bg-[#50626b]">
        <Svg w={24} h={24} className="mt-2">
          <circle cx="12" cy="12.500" r="10.500" fill="#62bb2e" stroke="#d8efc8" />
          <path d="M17 13H7.500M17 13c0-7-9.500-7-9.500 0 0 6 7 6 9 3" stroke="#fff" strokeWidth="3" />
          <path d="M9 4c5-2 9-3 13-4-1 3-3 4-6 5" fill="#7ccc36" />
          <circle cx="18" cy="19" r="5" fill="#8bc34a" stroke="#fff" />
        </Svg>
      </div>
      <div className="ml-[13px] mt-2 flex h-6 w-6 justify-center rounded-[3px] bg-white">
        <Svg w={20} h={24}><ellipse cx="10" cy="10" rx="6.500" ry="7.500" fill="#111" /><path d="M4 13h12l3 7H1z" fill="#111" /><ellipse cx="10" cy="18" rx="5.500" ry="6" fill="#fff" /><ellipse cx="7.800" cy="7" rx="1.500" ry="2" fill="#fff" /><ellipse cx="12.200" cy="7" rx="1.500" ry="2" fill="#fff" /><ellipse cx="10" cy="10.500" rx="4" ry="1.300" fill="#f5a916" /><path d="M3.500 12c4 3 9 3 13 0v3c-4 2-9 2-13 0z" fill="#ec1f27" /></Svg>
      </div>
      <div className="ml-[25px] mt-2 flex h-6 w-6 items-center justify-center rounded-[4px] bg-[#07d763]"><FaWeixin size={18} /></div>
      <div className="ml-auto flex items-start">
        <Svg w={12} h={7} className="mt-[17px]"><path d="M1 6l5-5 5 5" stroke="#fff" strokeWidth="1.400" /></Svg>
        <div className="ml-[10px] mt-3 flex h-4 w-4 items-center justify-center rounded-[3px] bg-[#07c160]"><FaWeixin size={12} /></div>
        <Svg w={16} h={16} className="ml-[9px] mt-3"><ellipse cx="7.500" cy="6" rx="5" ry="6" fill="#111" /><path d="M3 8h9l3 7H1z" fill="#e8336c" /><circle cx="6" cy="4" r="1.200" fill="#fff" /><circle cx="9" cy="4" r="1.200" fill="#fff" /><path d="M5 6.500h5" stroke="#f5a916" strokeWidth="1.500" /><ellipse cx="6" cy="13" rx="3" ry="3.500" fill="#fff" /><circle cx="12" cy="12" r="3.500" fill="#f6a266" /><path d="M9 1l4-1v3z" fill="#e8336c" /></Svg>
        <Svg w={16} h={15} className="ml-[7px] mt-[14px]"><path d="M4 2h11v8H4M9 10v4M6 14h7" stroke="#fff" strokeWidth="1.200" /><path d="M.6.6h3v3h-3zM2 4v9" stroke="#fff" strokeWidth="1.200" /></Svg>
        <Svg w={17} h={14} className="ml-2 mt-[13px]"><path d="M.6 4.500h3L7 1v12L3.600 9.500h-3zM9 5c1 1 1 3 0 4M11.500 3c2 2 2 6 0 8M14 1c3 3 3 9 0 12" stroke="#fff" strokeWidth="1.100" /></Svg>
        <Svg w={23} h={13} className="ml-[7px] mt-[14px]"><rect x=".6" y=".6" width="21.800" height="11.800" stroke="#fff" strokeWidth="1.100" /><path d="M3 4h17M3 6.500h17" stroke="#fff" strokeDasharray="1.200 1.200" /><path d="M6 9.500h11" stroke="#fff" /></Svg>
        <span className="ml-[10px] mt-[13px] text-[13px] leading-[14px]">中</span>
        <div className="ml-[14px] mt-[12px]"><Sogou size={16} /></div>
        <div className="ml-[10px] mt-[3px] w-[72px] text-center text-[12px] leading-[16px] tracking-[0.200px]"><div>14:14</div><div className="mt-[2px]">2025/10/13</div></div>
        <div className="ml-[13px] mr-[6px] mt-3">
          <Svg w={24} h={16}><path d="M0 0h16v12H8l-3 4v-4H0z" fill="#fff" /><path d="M3 3.500h10M3 6h10M3 8.500h7" stroke="#1a2842" /><circle cx="15" cy="15" r="7" fill="#4b4f57" stroke="#ccc" /><text x="12.500" y="18" fontSize="10" fill="#fff">1</text></Svg>
        </div>
      </div>
    </footer>
  );
}

export default function App() {
  return (
    <div className="relative flex h-[1067px] w-[1909px] flex-col overflow-hidden bg-white [font-family:'Open_Sans','Noto_Sans_CJK_SC',sans-serif]">
      <TabBar />
      <AddressRow />
      <BookmarkRow />
      <div className="flex h-[935px] shrink-0 border-b border-white">
        <Sidebar />
        <div className="flex w-[1855px] shrink-0 flex-col overflow-hidden bg-[#f0f1f5]">
          <SiteHeader />
          <PostForm />
        </div>
        <div className="w-[6px] shrink-0 bg-[#f1f1f1] pl-[2px] pt-[17px]">
          <div className="h-[764px] bg-[#c1c1c1]" />
        </div>
      </div>
      <div className="h-px shrink-0 bg-white" />
      <Taskbar />
      <InputMethodBar />
      <svg className="pointer-events-none absolute left-[1650px] top-[20px] z-20" width="170" height="200" viewBox="1650 20 170 200">
        <path d="M1801 25 1787.500 32 1791 36.500Q1738 98 1660 209 1744 109 1797 43L1801 41z" fill="#fa3a36" />
      </svg>
    </div>
  );
}
